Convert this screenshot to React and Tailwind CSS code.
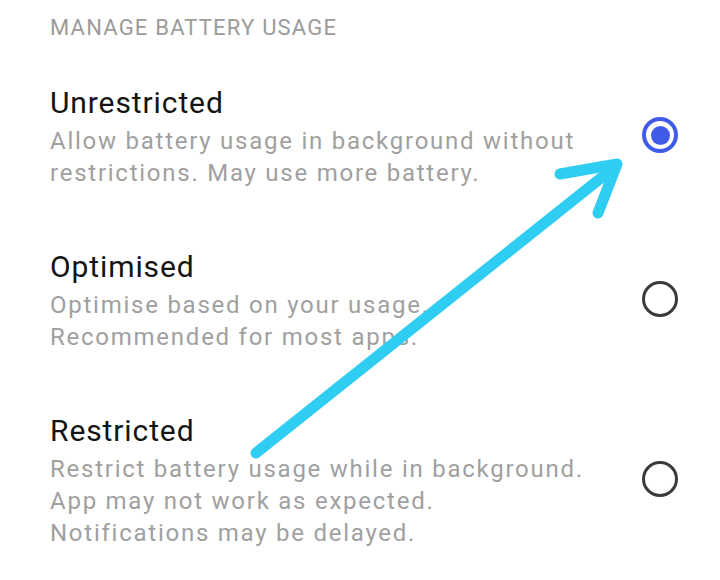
import React from 'react';

const options = [
  {
    title: 'Unrestricted',
    lines: ['Allow battery usage in background without', 'restrictions. May use more battery.'],
    selected: true,
  },
  {
    title: 'Optimised',
    lines: ['Optimise based on your usage.', 'Recommended for most apps.'],
    selected: false,
  },
  {
    title: 'Restricted',
    lines: [
      'Restrict battery usage while in background.',
      'App may not work as expected.',
      'Notifications may be delayed.',
    ],
    selected: false,
  },
];

function Radio({ selected }) {
  if (selected) {
    return (
      <div className="w-[36px] h-[36px] rounded-full border-[4px] border-[#3f5be8] flex items-center justify-center shrink-0">
        <div className="w-[19px] h-[19px] rounded-full bg-[#3f5be8]" />
      </div>
    );
  }
  return <div className="w-[36px] h-[36px] rounded-full border-[3px] border-[#3a3a3a] shrink-0" />;
}

export default function App() {
  return (
    <div className="relative w-[720px] h-[580px] bg-white overflow-hidden font-['Roboto','Liberation_Sans',sans-serif]">
      <div className="pl-[50px] pr-[42px] pt-[14px]">
        <div className="text-[22px] leading-[28px] text-[#9b9b9b] tracking-[1.2px]">MANAGE BATTERY USAGE</div>

        <div className="mt-[43px] flex flex-col gap-[60px]">
          {options.map((opt) => (
            <div key={opt.title} className="flex items-center justify-between">
              <div>
                <div className="text-[30px] leading-[36px] text-[#141414] tracking-[0.9px]">{opt.title}</div>
                <div className="mt-[4px] text-[24px] leading-[32px] text-[#a0a0a0] tracking-[1.75px]">
                  {opt.lines.map((l) => (
                    <div key={l}>{l}</div>
                  ))}
                </div>
              </div>
              <div className="mb-[4px]">
                <Radio selected={opt.selected} />
              </div>
            </div>
          ))}
        </div>
      </div>

      <svg
        className="absolute inset-0 pointer-events-none"
        width="720"
        height="580"
        viewBox="0 0 720 580"
        fill="none"
      >
        <g stroke="#2fcdf2" strokeWidth="11" strokeLinecap="round" strokeLinejoin="round">
          <path d="M256 453 L616 166" />
          <path d="M560 174 L617 164 L598 213" />
        </g>
      </svg>
    </div>
  );
}
